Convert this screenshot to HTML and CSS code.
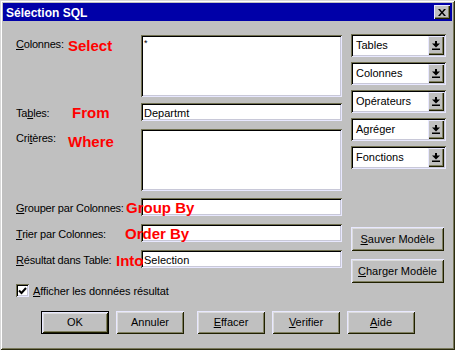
FILE: index.html
```html
<!DOCTYPE html>
<html lang="fr">
<head>
  <meta charset="UTF-8">
  <title>Sélection SQL</title>
  <link rel="stylesheet" href="styles.css">
</head>
<body>

  <div class="window">
    <!-- Title bar -->
    <div class="titlebar">
      <span class="title">Sélection SQL</span>
      <span class="close">
        <svg width="8" height="7" viewBox="0 0 8 7"><path d="M0 0h2l2 2.5L6 0h2L5 3.5 8 7H6L4 4.5 2 7H0l3-3.5z" fill="#000"/></svg>
      </span>
    </div>

    <div class="content">
      <!-- Left form -->
      <div class="form">
        <div class="row tall">
          <label class="lbl"><u>C</u>olonnes:</label>
          <div class="field area"><span class="star">*</span></div>
          <span class="sql tag-select">Select</span>
        </div>
        <div class="row r-tables">
          <label class="lbl">Ta<u>b</u>les:</label>
          <div class="field">Departmt</div>
          <span class="sql tag-from">From</span>
        </div>
        <div class="row tall r-where">
          <label class="lbl">Cri<u>t</u>ères:</label>
          <div class="field area"></div>
          <span class="sql tag-where">Where</span>
        </div>
        <div class="row r-group">
          <label class="lbl"><u>G</u>rouper par Colonnes:</label>
          <div class="field"></div>
          <span class="sql tag-group">Group By</span>
        </div>
        <div class="row r-next">
          <label class="lbl"><u>T</u>rier par Colonnes:</label>
          <div class="field"></div>
          <span class="sql tag-order">Order By</span>
        </div>
        <div class="row r-next">
          <label class="lbl"><u>R</u>ésultat dans Table:</label>
          <div class="field">Selection</div>
          <span class="sql tag-into">Into</span>
        </div>

        <div class="check-row">
          <span class="checkbox">
            <svg width="9" height="8" viewBox="0 0 9 8"><path d="M1 3.5l2.5 2.5L8 1" fill="none" stroke="#000" stroke-width="2"/></svg>
          </span>
          <span class="check-label"><u>A</u>fficher les données résultat</span>
        </div>
      </div>

      <!-- Right side -->
      <div class="side">
        <div class="combo"><span class="combo-text">Tables</span><span class="arrow"><svg width="8" height="9" viewBox="0 0 8 9"><path d="M3 0h2v2.5h3L4 6.5 0 2.5h3z" fill="#000"/><rect x="0" y="7.5" width="8" height="1.5" fill="#000"/></svg></span></div>
        <div class="combo"><span class="combo-text">Colonnes</span><span class="arrow"><svg width="8" height="9" viewBox="0 0 8 9"><path d="M3 0h2v2.5h3L4 6.5 0 2.5h3z" fill="#000"/><rect x="0" y="7.5" width="8" height="1.5" fill="#000"/></svg></span></div>
        <div class="combo"><span class="combo-text">Opérateurs</span><span class="arrow"><svg width="8" height="9" viewBox="0 0 8 9"><path d="M3 0h2v2.5h3L4 6.5 0 2.5h3z" fill="#000"/><rect x="0" y="7.5" width="8" height="1.5" fill="#000"/></svg></span></div>
        <div class="combo"><span class="combo-text">Agréger</span><span class="arrow"><svg width="8" height="9" viewBox="0 0 8 9"><path d="M3 0h2v2.5h3L4 6.5 0 2.5h3z" fill="#000"/><rect x="0" y="7.5" width="8" height="1.5" fill="#000"/></svg></span></div>
        <div class="combo"><span class="combo-text">Fonctions</span><span class="arrow"><svg width="8" height="9" viewBox="0 0 8 9"><path d="M3 0h2v2.5h3L4 6.5 0 2.5h3z" fill="#000"/><rect x="0" y="7.5" width="8" height="1.5" fill="#000"/></svg></span></div>

        <div class="btn side-btn save"><u>S</u>auver Modèle</div>
        <div class="btn side-btn"><u>C</u>harger Modèle</div>
      </div>
    </div>

    <!-- Bottom buttons -->
    <div class="buttons">
      <div class="btn default">OK</div>
      <div class="btn">Annuler</div>
      <div class="btn wide-gap"><u>E</u>ffacer</div>
      <div class="btn"><u>V</u>erifier</div>
      <div class="btn"><u>A</u>ide</div>
    </div>
  </div>

</body>
</html>
```

FILE: styles.css
```css
* {
  margin: 0;
  padding: 0;
  box-sizing: border-box;
}

body {
  font-family: 'Liberation Sans', Arial, sans-serif;
  font-size: 11px;
  color: #000;
  background-color: #c0c0c0;
}

u {
  text-decoration: underline;
  text-underline-offset: 1px;
}

/* Window frame */
.window {
  width: 455px;
  height: 350px;
  padding: 3px;
  background-color: #c0c0c0;
  box-shadow: inset 1px 1px #d8d8d8, inset -1px -1px #2c2c10,
              inset 2px 2px #ffffff, inset -2px -2px #78785a;
}

/* Title bar */
.titlebar {
  height: 18px;
  background-color: #0000a8;
  display: flex;
  justify-content: space-between;
  align-items: center;
  padding: 0 2px 0 3px;
}

.titlebar .title {
  color: #fff;
  font-weight: bold;
  font-size: 12px;
  line-height: 18px;
  padding-top: 1px;
}

.titlebar .close {
  width: 16px;
  height: 14px;
  background-color: #c0c0c0;
  display: flex;
  align-items: center;
  justify-content: center;
  box-shadow: inset 1px 1px #e8e8ff, inset -1px -1px #202000,
              inset -2px -2px #808060;
}

/* Main area */
.content {
  display: flex;
  padding: 14px 0 0 13px;
}

.form {
  width: 326px;
}

.row {
  display: flex;
  position: relative;
  height: 18px;
}

.row.tall {
  height: 62px;
}

.r-tables {
  margin-top: 6px;
}

.r-where {
  margin-top: 8px;
}

.r-group {
  margin-top: 7px;
}

.r-next {
  margin-top: 8px;
}

.lbl {
  width: 125px;
  line-height: 16px;
  padding-top: 2px;
  letter-spacing: -0.2px;
}

.row.tall .lbl {
  line-height: 13px;
  padding-top: 3px;
}

.field {
  width: 201px;
  height: 100%;
  background-color: #fff;
  padding: 0 3px;
  line-height: 16px;
  padding-top: 2px;
  box-shadow: inset 1px 1px #707050, inset -1px -1px #e8e8ff,
              inset 2px 2px #000000, inset -2px -2px #c8c8d8;
}

.field.area .star {
  font-size: 9px;
  line-height: 9px;
  display: block;
  padding-top: 2px;
}

/* Red SQL keywords lying over the form */
.sql {
  position: absolute;
  color: #ff0000;
  font-weight: bold;
  font-size: 15px;
  line-height: 15px;
  white-space: nowrap;
}

.tag-select { left: 52px; top: 3px; }
.tag-from   { left: 56px; top: 2px; }
.tag-where  { left: 52px; top: 5px; }
.tag-group  { left: 110px; top: 2px; }
.tag-order  { left: 109px; top: 2px; }
.tag-into   { left: 100px; top: 3px; }

/* Checkbox */
.check-row {
  display: flex;
  align-items: center;
  gap: 4px;
  margin-top: 16px;
  height: 13px;
}

.check-label {
  letter-spacing: -0.1px;
}

.checkbox {
  width: 13px;
  height: 13px;
  background-color: #fff;
  display: flex;
  align-items: center;
  justify-content: center;
  box-shadow: inset 1px 1px #707050, inset -1px -1px #e8e8ff,
              inset 2px 2px #000000, inset -2px -2px #c8c8d8;
}

/* Right column */
.side {
  width: 95px;
  margin-left: 9px;
  margin-top: -1px;
  display: flex;
  flex-direction: column;
  gap: 5px;
}

.combo {
  height: 23px;
  display: flex;
  align-items: stretch;
  background-color: #fff;
  padding: 2px;
  box-shadow: inset 1px 1px #707050, inset -1px -1px #e8e8ff,
              inset 2px 2px #000000, inset -2px -2px #c8c8d8;
}

.combo-text {
  flex: 1;
  padding-left: 3px;
  line-height: 19px;
}

.arrow {
  width: 16px;
  background-color: #c0c0c0;
  display: flex;
  align-items: center;
  justify-content: center;
  box-shadow: inset 1px 1px #e8e8ff, inset -1px -1px #202000,
              inset -2px -2px #808060;
}

/* Buttons */
.btn {
  width: 68px;
  height: 23px;
  line-height: 23px;
  text-align: center;
  background-color: #c0c0c0;
  box-shadow: inset 1px 1px #e8e8ff, inset -1px -1px #202000,
              inset 2px 2px #dcdcdc, inset -2px -2px #808060;
}

.btn.default {
  border: 1px solid #000;
  line-height: 21px;
}

.side-btn {
  width: 93px;
  height: 24px;
  line-height: 24px;
}

.side-btn.save {
  margin-top: 53px;
  margin-bottom: 3px;
}

.buttons {
  display: flex;
  gap: 7px;
  padding-left: 38px;
  margin-top: 14px;
}

.buttons .wide-gap {
  margin-left: 6px;
}
```
